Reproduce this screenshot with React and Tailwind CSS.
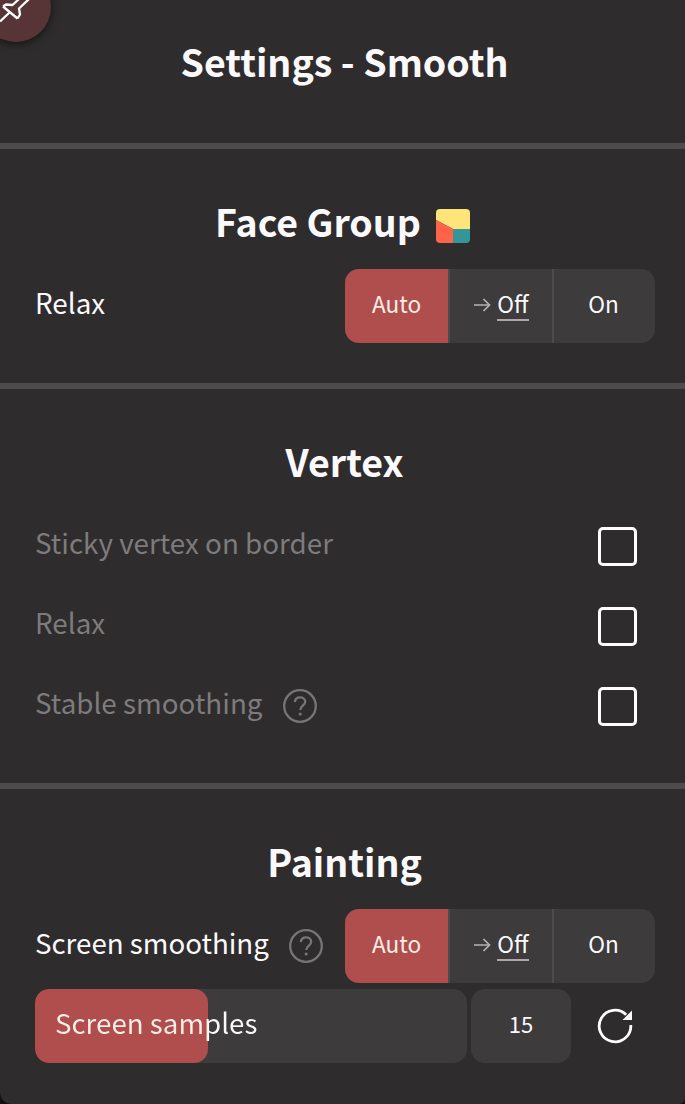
import React from "react";

function Heading({ children }) {
  return (
    <h2 className="flex h-20 items-center justify-center pt-px pl-[4px] text-[37.5px] leading-[80px] font-bold whitespace-nowrap text-[#fbf9fb]">
      {children}
    </h2>
  );
}

function Help() {
  return (
    <svg className="ml-[19px] size-[36px] shrink-0" viewBox="0 0 36 36" fill="none" stroke="#777576" strokeWidth="2.3">
      <circle cx="18" cy="18" r="15.8" />
      <path d="M12.8 14.2c.2-2.9 2.2-4.9 5.2-4.9s5.2 1.8 5.2 4.4c0 4-4.9 4-4.9 8.4" />
      <circle cx="18.2" cy="26" r="1.6" fill="#777576" stroke="none" />
    </svg>
  );
}

function Segmented() {
  return (
    <div className="ml-auto flex h-[74px] w-[310px] shrink-0 overflow-hidden rounded-[14px] bg-[#3d3b3c] text-[22.6px] text-[#fbf9fb]">
      <button className="h-full w-[103px] bg-[#b04d4d] pb-[5px] text-[#ffeee5]">Auto</button>
      <button className="flex h-full w-[106px] items-center justify-center border-x-2 border-[#4d4b4c] pb-1">
        <svg className="mr-1.5 h-4 w-[18px]" viewBox="0 0 18 16" fill="none" stroke="#b5b3b4" strokeWidth="1.7">
          <path d="M1 9h15M10.5 3 16.5 9l-6 6" />
        </svg>
        <span className="flex h-[34px] items-center border-b-2 border-[#aaa8a9] pt-px leading-[30px]">Off</span>
      </button>
      <button className="h-full w-[101px] pr-0.5 pb-[5px]">On</button>
    </div>
  );
}

function CheckRow({ label, help }) {
  return (
    <div className="flex h-20 items-center pr-[48px] pl-[35px]">
      <span className="-mt-[9px] text-[27.8px] leading-10 text-[#7d7b7c]">{label}</span>
      {help && <Help />}
      <button aria-label={label} className="ml-auto size-[39px] rounded-[5px] border-[3px] border-white" />
    </div>
  );
}

export default function App() {
  return (
    <div className="h-[1104px] w-[685px] overflow-hidden bg-[#111]">
      <div className="relative flex h-full flex-col overflow-hidden rounded-br-[6px] rounded-bl-[12px] bg-[#2e2c2d] font-['Noto_Sans_CJK_SC','Noto_Sans',sans-serif]">
        <div className="absolute -top-[28px] -left-[19px] size-[70px] rounded-full bg-[#573436] shadow-[0_2px_10px_rgba(0,0,0,0.6)]">
          <svg className="absolute top-[28px] left-[19px] h-[30px] w-[32px]" viewBox="0 0 32 30" fill="none" stroke="#fff" strokeWidth="2.3" strokeLinejoin="round">
            <path d="M0 21.5 9.5 12.5M3 6.5 17.5 18.5M3 6.5 6 4.5l6.5.5L19-1M17.5 18.5l2.5-4-1-6L29-1" />
          </svg>
        </div>
        <section className="h-[149px] border-b-[6px] border-[#4d4b4c] pt-5">
          <Heading>Settings - Smooth</Heading>
        </section>
        <section className="h-[240px] border-b-[6px] border-[#4d4b4c] pt-[31px]">
          <Heading>
            <span className="-ml-[4px]">Face Group</span>
            <svg className="mt-[10px] ml-[15px] size-[34px]" viewBox="0 0 34 34">
              <clipPath id="tile"><rect width="34" height="34" rx="4" /></clipPath>
              <g clipPath="url(#tile)">
                <path fill="#ffe47a" d="M0 0h34v20H17L0 11z" />
                <path fill="#ff634a" d="M0 11l17 9v14H0z" />
                <path fill="#35969a" d="M17 20h17v14H17z" />
              </g>
            </svg>
          </Heading>
          <div className="mt-[9px] flex h-[74px] items-center pr-[30px] pl-[35px]">
            <span className="-mt-[9px] text-[27.8px] leading-10 text-[#fbf9fb]">Relax</span>
            <Segmented />
          </div>
        </section>
        <section className="h-[400px] border-b-[6px] border-[#4d4b4c] pt-[31px]">
          <Heading>Vertex</Heading>
          <div className="mt-1.5">
            <CheckRow label="Sticky vertex on border" />
            <CheckRow label="Relax" />
            <CheckRow label="Stable smoothing" help />
          </div>
        </section>
        <section className="pt-[31px]">
          <Heading>Painting</Heading>
          <div className="mt-[9px] flex h-[74px] items-center pr-[30px] pl-[35px]">
            <span className="-mt-[9px] text-[27.7px] leading-10 text-[#fbf9fb]">Screen smoothing</span>
            <Help />
            <Segmented />
          </div>
          <div className="mt-1.5 flex h-[74px] items-center pr-[51px] pl-[35px]">
            <div className="grid h-[74px] w-[432px] overflow-hidden rounded-[14px] bg-[#3d3b3c]">
              <div className="col-start-1 row-start-1 w-[173px] rounded-[14px] bg-[#b04d4d]" />
              <span className="col-start-1 row-start-1 ml-5 bg-linear-to-r from-[#ffeee5] from-[153px] to-[#fbf9fb] to-[153px] bg-clip-text text-[27.7px] leading-[67px] text-transparent">Screen samples</span>
            </div>
            <div className="ml-1 h-[74px] w-[100px] rounded-[14px] bg-[#3d3b3c] text-center text-[22px] leading-[69px] text-[#fbf9fb]">15</div>
            <svg className="ml-auto size-[38px]" viewBox="0 0 38 38" fill="none">
              <path d="M34.8 18A15.8 15.8 0 1 1 30.2 7.8" stroke="#fff" strokeWidth="2.8" />
              <path d="M36 3.5V13h-9.5z" fill="#fff" />
            </svg>
          </div>
        </section>
      </div>
    </div>
  );
}
